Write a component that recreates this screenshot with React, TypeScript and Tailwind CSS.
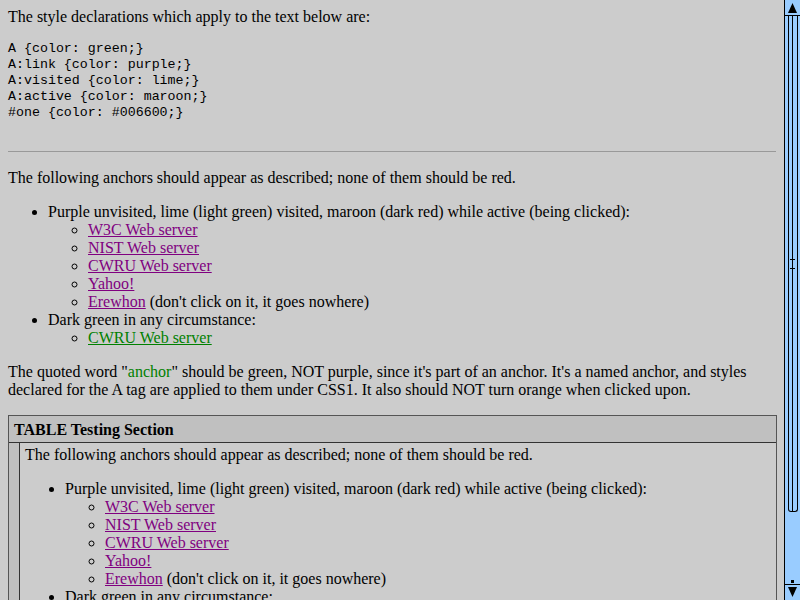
import React from "react";

const purple = "text-[#800080] underline";
const green = "text-[#008000] underline";

function AnchorList() {
  return (
    <ul className="mt-4 list-disc pl-10">
      <li>
        Purple unvisited, lime (light green) visited, maroon (dark red) while active (being clicked):
        <ul className="list-[circle] pl-10">
          <li><a className={purple}>W3C Web server</a></li>
          <li><a className={purple}>NIST Web server</a></li>
          <li><a className={purple}>CWRU Web server</a></li>
          <li><a className={purple}>Yahoo!</a></li>
          <li><a className={purple}>Erewhon</a> (don't click on it, it goes nowhere)</li>
        </ul>
      </li>
      <li>
        Dark green in any circumstance:
        <ul className="list-[circle] pl-10">
          <li><a className={green}>CWRU Web server</a></li>
        </ul>
      </li>
    </ul>
  );
}

function Scrollbar() {
  return (
    <div className="flex h-full w-[16px] flex-col border-l border-black bg-[#99ccff]">
      <div className="flex h-[16px] items-start justify-center border-b border-black pt-[3px]">
        <svg width="9" height="10" viewBox="0 0 9 10">
          <polygon points="4.5,0 9,10 0,10" fill="black" />
        </svg>
      </div>
      <div className="mx-auto flex h-[496px] w-[10px] flex-col rounded-b-[3px] border-x border-b border-black">
        <div className="mx-auto flex h-full w-px flex-col items-center justify-center bg-black">
          <div className="relative h-[10px] w-px">
            <div className="absolute left-[-2px] top-0 h-px w-[5px] bg-black" />
            <div className="absolute bottom-0 left-[-2px] h-px w-[5px] bg-black" />
          </div>
        </div>
      </div>
      <div className="flex flex-1 items-end justify-center pb-[1px]">
        <div className="h-[3px] w-[3px] bg-black" />
      </div>
      <div className="flex h-[16px] items-end justify-center border-t border-black pb-[3px]">
        <svg width="9" height="10" viewBox="0 0 9 10">
          <polygon points="0,0 9,0 4.5,10" fill="black" />
        </svg>
      </div>
    </div>
  );
}

export default function App() {
  return (
    <div className="flex h-[600px] w-[800px] overflow-hidden bg-[#cccccc] font-['Liberation_Serif',serif] text-[16px] leading-[18px] text-black">
      <div className="flex-1 overflow-hidden px-2 pt-2">
        <p>The style declarations which apply to the text below are:</p>
        <pre className="mt-[15px] font-['Liberation_Mono',monospace] text-[13.3px] leading-[16px]">
{`A {color: green;}
A:link {color: purple;}
A:visited {color: lime;}
A:active {color: maroon;}
#one {color: #006600;}`}
        </pre>
        <hr className="mt-[30px] border-t border-[#999]" />
        <p className="mt-[17px]">
          The following anchors should appear as described; none of them should be red.
        </p>
        <AnchorList />
        <p className="mt-4">
          The quoted word "<span className="text-[#008000]">anchor</span>" should be green, NOT purple, since
          it's part of an anchor. It's a named anchor, and styles
          <br />
          declared for the A tag are applied to them under CSS1. It also should NOT turn orange when clicked upon.
        </p>
        <div className="mt-4 w-[769px] border border-[#555]">
          <div className="border-b border-[#333] bg-[#c0c0c0] px-[5px] pt-[5px] pb-[3px] font-bold">
            TABLE Testing Section
          </div>
          <div className="flex">
            <div className="w-[11px] shrink-0 border-r border-[#333] bg-[#c0c0c0]" />
            <div className="flex-1 pl-[5px] pt-[3px] pb-4">
              <p>The following anchors should appear as described; none of them should be red.</p>
              <AnchorList />
            </div>
          </div>
        </div>
      </div>
      <Scrollbar />
    </div>
  );
}
